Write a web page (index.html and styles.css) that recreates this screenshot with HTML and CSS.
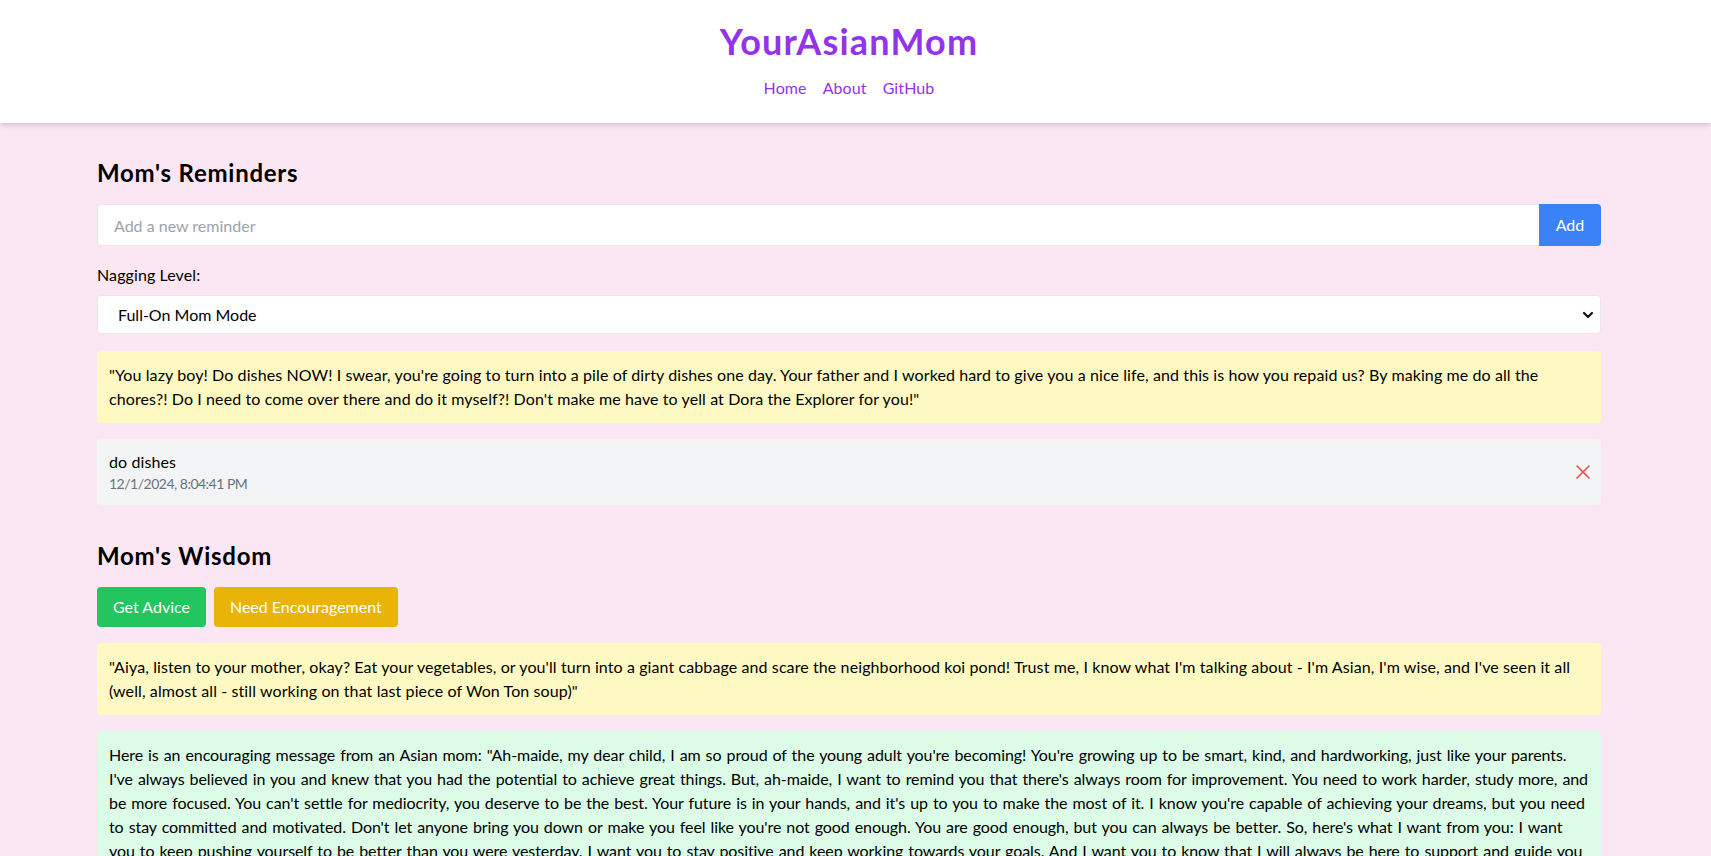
FILE: index.html
```html
<!DOCTYPE html>
<html lang="en">
<head>
<meta charset="utf-8">
<title>YourAsianMom</title>
<link rel="stylesheet" href="styles.css">
</head>
<body>
<header class="site-header">
  <div class="header-inner">
    <h1 class="brand">YourAsianMom</h1>
    <nav class="nav">
      <a href="#">Home</a>
      <a href="#">About</a>
      <a href="#">GitHub</a>
    </nav>
  </div>
</header>

<main class="main">
  <div class="container">
    <section class="section reminders">
      <h2 class="section-title">Mom's Reminders</h2>
      <form class="add-row">
        <input class="text-input" type="text" placeholder="Add a new reminder">
        <button type="button" class="btn btn-blue btn-add">Add</button>
      </form>
      <label class="field-label">Nagging Level:</label>
      <div class="select-wrap">
        <select class="select">
          <option>Full-On Mom Mode</option>
          <option>Gentle Reminder</option>
          <option>Passive Aggressive</option>
        </select>
        <svg class="chevron" width="12" height="12" viewBox="0 0 12 12" aria-hidden="true"><path d="M2 4l4 4 4-4" fill="none" stroke="#111" stroke-width="2.2" stroke-linecap="round" stroke-linejoin="round"/></svg>
      </div>
      <div class="note note-yellow">"You lazy boy! Do dishes NOW! I swear, you're going to turn into a pile of dirty dishes one day. Your father and I worked hard to give you a nice life, and this is how you repaid us? By making me do all the chores?! Do I need to come over there and do it myself?! Don't make me have to yell at Dora the Explorer for you!"</div>
      <ul class="reminder-list">
        <li class="reminder">
          <div class="reminder-body">
            <div class="reminder-text">do dishes</div>
            <div class="reminder-date">12/1/2024, 8:04:41 PM</div>
          </div>
          <button type="button" class="delete" aria-label="Delete">
            <svg width="24" height="24" viewBox="0 0 24 24" fill="none" stroke="#ef4444" stroke-width="1.5" stroke-linecap="round"><path d="M18 6 6 18M6 6l12 12"/></svg>
          </button>
        </li>
      </ul>
    </section>

    <section class="section wisdom">
      <h2 class="section-title">Mom's Wisdom</h2>
      <div class="btn-row">
        <button type="button" class="btn btn-green">Get Advice</button>
        <button type="button" class="btn btn-amber">Need Encouragement</button>
      </div>
      <div class="note note-yellow">"Aiya, listen to your mother, okay? Eat your vegetables, or you'll turn into a giant cabbage and scare the neighborhood koi pond! Trust me, I know what I'm talking about - I'm Asian, I'm wise, and I've seen it all (well, almost all - still working on that last piece of Won Ton soup)"</div>
      <div class="note note-green">Here is an encouraging message from an Asian mom: "Ah-maide, my dear child, I am so proud of the young adult you're becoming! You're growing up to be smart, kind, and hardworking, just like your parents. I've always believed in you and knew that you had the potential to achieve great things. But, ah-maide, I want to remind you that there's always room for improvement. You need to work harder, study more, and be more focused. You can't settle for mediocrity, you deserve to be the best. Your future is in your hands, and it's up to you to make the most of it. I know you're capable of achieving your dreams, but you need to stay committed and motivated. Don't let anyone bring you down or make you feel like you're not good enough. You are good enough, but you can always be better. So, here's what I want from you: I want you to keep pushing yourself to be better than you were yesterday. I want you to stay positive and keep working towards your goals. And I want you to know that I will always be here to support and guide you every step of the way. Now go, make your mother proud!"</div>
    </section>
  </div>
</main>
</body>
</html>
```
FILE: styles.css
```css
* { box-sizing: border-box; }

html, body {
  margin: 0;
  padding: 0;
}

body {
  background: #fbe6f3;
  color: #000;
  font-family: "Lato", "Liberation Sans", sans-serif;
  font-size: 16px;
  line-height: 24px;
  letter-spacing: 0.1px;
}

/* header */
.site-header {
  background: #fff;
  box-shadow: 0 4px 6px -1px rgba(0,0,0,0.1), 0 2px 4px -2px rgba(0,0,0,0.1);
  padding-right: 13px;
}

.header-inner {
  height: 123px;
  padding-top: 21px;
  display: flex;
  flex-direction: column;
  align-items: center;
}

.brand {
  margin: 0;
  font-size: 36px;
  line-height: 40px;
  font-weight: 700;
  color: #9333ea;
  letter-spacing: 1.2px;
}

.nav {
  margin-top: 15px;
  display: flex;
  gap: 16px;
}

.nav a {
  color: #9333ea;
  text-decoration: none;
  font-size: 16px;
  line-height: 24px;
}

/* main */
.main {
  padding: 34px 13px 40px 0;
}

.container {
  max-width: 1536px;
  margin: 0 auto;
  padding: 0 16px;
}

.section + .section {
  margin-top: 35px;
}

.section-title {
  margin: 0 0 15px;
  font-size: 24px;
  line-height: 32px;
  font-weight: 700;
  letter-spacing: 0.75px;
}

.add-row {
  display: flex;
  margin: 0 0 17px;
}

.text-input {
  flex: 1;
  height: 42px;
  border: 1px solid #e5e7eb;
  border-right: 0;
  border-radius: 4px 0 0 4px;
  padding: 8px 16px;
  font: inherit;
  background: #fff;
  outline: none;
}

.text-input::placeholder {
  color: #9ca3af;
}

.btn {
  border: 0;
  font: inherit;
  color: #fff;
  padding: 8px 16px;
  border-radius: 4px;
  line-height: 24px;
  cursor: pointer;
}

.btn-add {
  width: 62px;
  height: 42px;
  padding: 8px 0;
  border-radius: 0 4px 4px 0;
}

.btn-blue { background: #3b82f6; }
.btn-green { background: #22c55e; }
.btn-amber { background: #eab308; }

.field-label {
  display: block;
  margin-bottom: 8px;
}

.select-wrap {
  position: relative;
  margin-bottom: 17px;
}

.select {
  width: 100%;
  height: 39px;
  appearance: none;
  -webkit-appearance: none;
  background: #fff;
  border: 1px solid #e5e7eb;
  border-radius: 4px;
  padding: 0 20px;
  font: inherit;
  color: #000;
  outline: none;
}

.chevron {
  position: absolute;
  right: 7px;
  top: 14px;
  pointer-events: none;
}

.note {
  border-radius: 4px;
  padding: 12px 11px 12px 12px;
  margin-bottom: 16px;
}

.note-yellow { background: #fef9c3; }

.note-green {
  background: #dcfce7;
  word-spacing: 1px;
  letter-spacing: -0.075px;
}

.reminder-list {
  list-style: none;
  margin: 0;
  padding: 0;
}

.reminder {
  display: flex;
  align-items: center;
  justify-content: space-between;
  background: #f3f4f6;
  border-radius: 4px;
  padding: 11px 6px 11px 12px;
}

.reminder-date {
  font-size: 14px;
  line-height: 20px;
  color: #6b7280;
  letter-spacing: -0.5px;
}

.delete {
  border: 0;
  background: none;
  padding: 0;
  width: 24px;
  height: 24px;
  display: flex;
  cursor: pointer;
}

.btn-row {
  display: flex;
  gap: 8px;
  margin-bottom: 16px;
}

.btn-row .btn {
  height: 40px;
}
```
